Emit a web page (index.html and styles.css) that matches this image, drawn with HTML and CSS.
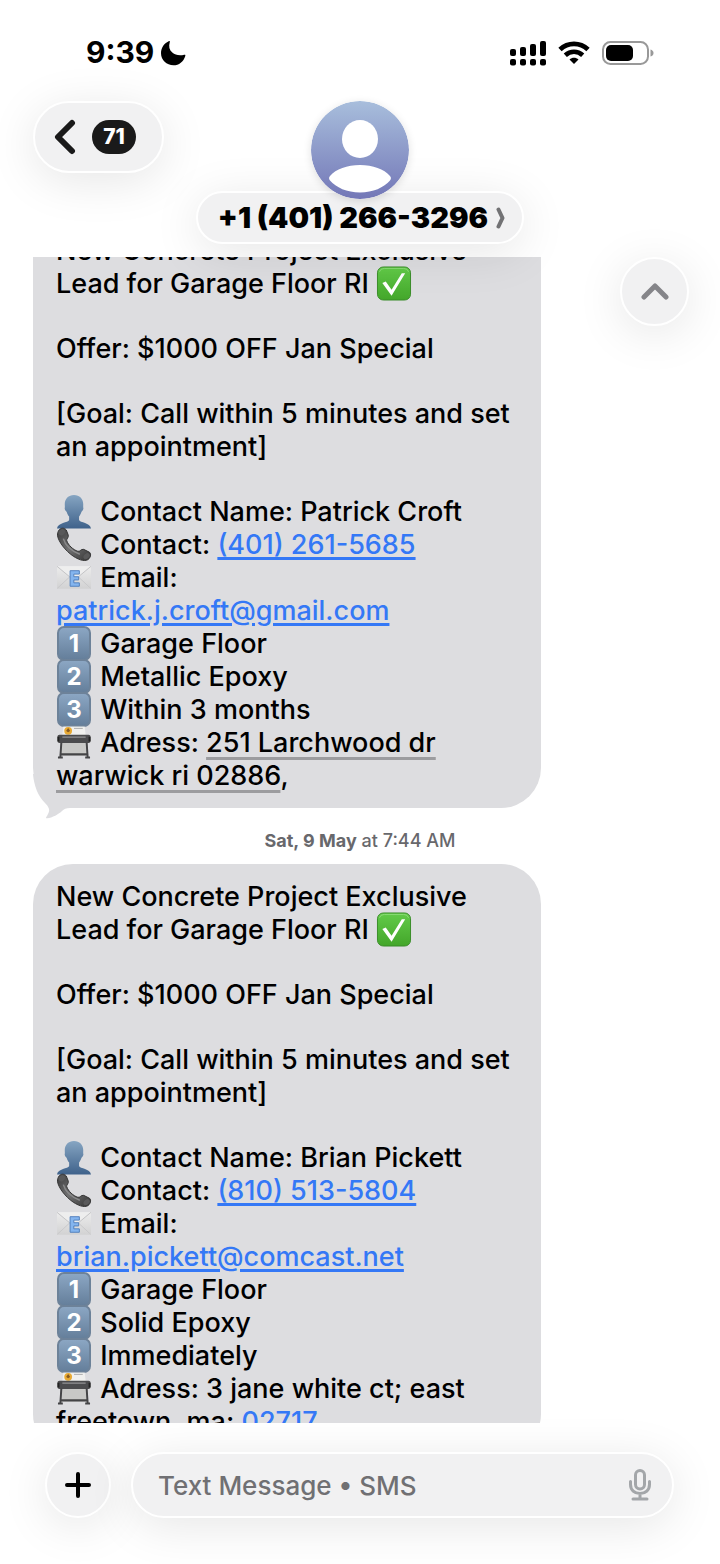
FILE: index.html
```html
<!DOCTYPE html>
<html lang="en">
<head>
    <meta charset="UTF-8">
    <meta name="viewport" content="width=device-width, initial-scale=1.0">
    <title>Messages</title>
    <link rel="stylesheet" href="styles.css">
</head>
<body>
    <!-- Shared emoji shapes -->
    <svg class="sprite" aria-hidden="true">
        <defs>
            <linearGradient id="green" x1="0" y1="0" x2="0" y2="1">
                <stop offset="0" stop-color="#62cb49"/>
                <stop offset="1" stop-color="#43a62a"/>
            </linearGradient>
            <linearGradient id="bust" x1="0" y1="0" x2="0" y2="1">
                <stop offset="0" stop-color="#86a5c2"/>
                <stop offset="1" stop-color="#3f628b"/>
            </linearGradient>
            <linearGradient id="paper" x1="0" y1="0" x2="0" y2="1">
                <stop offset="0" stop-color="#ececec"/>
                <stop offset="1" stop-color="#d2d2d3"/>
            </linearGradient>
            <linearGradient id="phone" x1="0" y1="0" x2="1" y2="1">
                <stop offset="0" stop-color="#3b3b3c"/>
                <stop offset="0.5" stop-color="#717172"/>
                <stop offset="1" stop-color="#333"/>
            </linearGradient>
        </defs>
        <symbol id="check" viewBox="0 0 36 36">
            <rect x="1" y="1" width="34" height="34" rx="6" fill="url(#green)" stroke="#398c28"/>
            <path d="M3 6q1-3.500 5-3.500h20q4 0 5 3.500" fill="none" stroke="#8bdc77"/>
            <path d="M6 17.500 9.500 16l6 8.500L26 7.500h3.500L15.500 30.500z" fill="#fff"/>
        </symbol>
        <symbol id="person" viewBox="0 0 36 36">
            <path d="M18 1c5.700 0 9.500 4 9.500 9.500 0 1.600-.2 3 .2 4.300-.2 1.600-1.300 2.700-2 3.500-.6 2.300-1.700 3.800-2.500 4.900v3.500c1 3 11.500 2.500 12.300 8.800H.5C1.300 29.200 12 29.700 13 26.700v-3.500c-1-1.100-2-2.600-2.600-4.900-.8-.8-1.800-1.900-2-3.500.4-1.300.1-2.700.1-4.300C8.500 5 12.300 1 18 1z" fill="url(#bust)"/>
        </symbol>
        <symbol id="handset" viewBox="0 0 36 36">
            <path d="M2 4C4 .5 8 .5 10 3l2 5c1 3-2 4-1.500 6 1.500 4.500 6.500 9.500 11.500 11 2.500.5 3-2.500 6-2l6 3c2 2 1 5.500-1.500 7.500-4 2.500-11 0-18-5.500C6 21 .5 12 1 7z" fill="url(#phone)" stroke="#333"/>
            <ellipse cx="5.500" cy="5.500" rx="3.600" ry="3" transform="rotate(-40 5.500 5.500)" fill="#59595a"/>
            <ellipse cx="31" cy="30" rx="3.600" ry="2.600" transform="rotate(-40 31 30)" fill="#59595a"/>
            <path d="M7 12c2 7 9 13 17 16" fill="none" stroke="#8a8a8b" stroke-width="1.500"/>
        </symbol>
        <symbol id="mail" viewBox="0 0 36 36">
            <path d="M.5 6.500h35v23H.5z" fill="url(#paper)"/>
            <path d="M.5 6.500 18 21 35.500 6.500" fill="#eee" stroke="#c2c2c4"/>
            <path d="M1 29l13-12M35 29L22 17" stroke="#c8c8ca"/>
            <path d="M14 11h9.500v3.500h-5.700v2.700h5v3.300h-5v3h5.700V27H14z" fill="#84b5ef" stroke="#5280bd"/>
        </symbol>
        <symbol id="printer" viewBox="0 0 36 36">
            <path d="M7 1.500h22l1 9H6z" fill="#f0f0ee"/>
            <circle cx="12" cy="6" r="4" fill="#e8aa34"/>
            <path d="M10 6q2 3 4 0l-2-3z" fill="#875a20"/>
            <path d="M18 3.500h9" stroke="#aaa"/>
            <path d="M5 17h26l1 14H4z" fill="#c8c8c6" stroke="#858584"/>
            <rect x="1" y="10" width="34" height="8.500" rx="2" fill="#4b4b4d"/>
            <path d="M6 12.500h24" stroke="#88888a" stroke-width="1.500"/>
            <path d="M2 12v5M34 12v5" stroke="#222" stroke-width="2"/>
            <path d="M5 18 4 32.500M31 18l1 14.500M4 30h28M1.500 33.500h5M29.500 33.500h5" fill="none" stroke="#444446" stroke-width="2"/>
        </symbol>
    </svg>

    <div class="screen">
        <header class="header">
            <div class="status">
                <div class="status-left">
                    <span class="clock">9:39</span>
                    <svg class="moon" viewBox="0 0 26 26" aria-label="Focus on">
                        <path d="M9.800 2C8.500 6.500 9.300 10 12.300 12.500S19 16 24.200 14.800c.9-.3 1.400.3 1.100 1.100C23.500 21.700 19 25.200 13.500 25.200 6.500 25.200 1 19.800 1 13.200 1 7.800 4 3.300 8.700 1.200c.8-.4 1.400.100 1.100.8z"/>
                    </svg>
                </div>
                <div class="status-right">
                    <svg class="signal" viewBox="0 0 36 26" aria-label="Signal">
                        <rect x="0" y="9" width="6" height="7" rx="2"/>
                        <rect x="10" y="7" width="6" height="9" rx="2"/>
                        <rect x="20" y="4" width="6" height="12" rx="2"/>
                        <rect x="30" y="1" width="6" height="15" rx="2"/>
                        <rect x="0" y="19" width="6" height="6.500" rx="2"/>
                        <rect x="10" y="19" width="6" height="6.500" rx="2"/>
                        <rect x="20" y="19" width="6" height="6.500" rx="2"/>
                        <rect x="30" y="19" width="6" height="6.500" rx="2"/>
                    </svg>
                    <svg class="wifi" viewBox="0 0 32 24" aria-label="Wi-Fi">
                        <path d="M2 8.500C10 .9 22 .9 30 8.500" fill="none" stroke="#000" stroke-width="4.800"/>
                        <path d="M7.300 14.200c5-4.700 12.400-4.700 17.400 0" fill="none" stroke="#000" stroke-width="4.600"/>
                        <path d="M11.500 18.500c2.600-2.400 6.400-2.400 9 0L16 23z"/>
                    </svg>
                    <svg class="battery" viewBox="0 0 52 26" aria-label="Battery">
                        <rect x="1" y="2" width="45" height="22" rx="7.500" fill="none" stroke="#999" stroke-width="2"/>
                        <rect x="4" y="5" width="27" height="16" rx="5"/>
                        <path d="M48.500 9.500q3 1 3 3.500t-3 3.500z" fill="#999"/>
                    </svg>
                </div>
            </div>

            <nav class="nav">
                <button class="glass back" type="button" aria-label="Back">
                    <svg class="back-arrow" viewBox="0 0 22 36" aria-hidden="true">
                        <path d="M18 4 4 18l14 14"/>
                    </svg>
                    <span class="count">71</span>
                </button>
                <div class="contact">
                    <svg class="avatar" viewBox="0 0 98 98" aria-hidden="true">
                        <defs>
                            <linearGradient id="sky" x1="0" y1="0" x2="0" y2="1">
                                <stop offset="0" stop-color="#a8bedc"/>
                                <stop offset="1" stop-color="#7377b7"/>
                            </linearGradient>
                        </defs>
                        <circle cx="49" cy="49" r="49" fill="url(#sky)"/>
                        <ellipse cx="49" cy="38" rx="18" ry="19" fill="#fff"/>
                        <path d="M19 75c6-7 17-11 30-11s24 4 30 11c1.500 1.500 1 3 0 4.500-6 7-17 12-30 12s-24-5-30-12c-1-1.500-1.500-3 0-4.500z" fill="#fff"/>
                    </svg>
                    <button class="glass number" type="button">
                        +1 (401) 266-3296
                        <svg class="more" viewBox="0 0 10 22" aria-hidden="true">
                            <path d="M2.500 2.500 L6.500 11 L2.500 19.500"/>
                        </svg>
                    </button>
                </div>
            </nav>
        </header>

        <main class="thread">
            <article class="bubble">
                <p>New Concrete Project Exclusive<br>
                Lead for Garage Floor RI <svg class="emoji" role="img" aria-label="check"><use href="#check"/></svg></p>
                <p>Offer: $1000 OFF Jan Special</p>
                <p>[Goal: Call within 5 minutes and set<br>an appointment]</p>
                <ul class="details">
                    <li><svg class="emoji" aria-hidden="true"><use href="#person"/></svg> Contact Name: Patrick Croft</li>
                    <li><svg class="emoji" aria-hidden="true"><use href="#handset"/></svg> Contact: <a href="tel:+14012615685">(401) 261-5685</a></li>
                    <li><svg class="emoji" aria-hidden="true"><use href="#mail"/></svg> Email:<br><a href="mailto:patrick.j.croft@gmail.com">patrick.j.croft@gmail.com</a></li>
                    <li><span class="emoji keycap">1</span> Garage Floor</li>
                    <li><span class="emoji keycap">2</span> Metallic Epoxy</li>
                    <li><span class="emoji keycap">3</span> Within 3 months</li>
                    <li><svg class="emoji" aria-hidden="true"><use href="#printer"/></svg> Adress: <a class="address" href="#map">251 Larchwood dr<br>warwick ri 02886</a>,</li>
                </ul>
                <svg class="tail" viewBox="0 0 44 46" aria-hidden="true">
                    <path d="M0 0C1 12 5 22 12 29c4 4 5 7 3.500 10-1 2-1.500 3-2.200 4-.6 1 0 1.500 1 1.200C19 44 26 40 29 37c2-2 4-3 8-3h7V0z"/>
                </svg>
            </article>

            <p class="stamp"><b>Sat, 9 May</b> at 7:44 AM</p>

            <article class="bubble">
                <p>New Concrete Project Exclusive<br>
                Lead for Garage Floor RI <svg class="emoji" role="img" aria-label="check"><use href="#check"/></svg></p>
                <p>Offer: $1000 OFF Jan Special</p>
                <p>[Goal: Call within 5 minutes and set<br>an appointment]</p>
                <ul class="details">
                    <li><svg class="emoji" aria-hidden="true"><use href="#person"/></svg> Contact Name: Brian Pickett</li>
                    <li><svg class="emoji" aria-hidden="true"><use href="#handset"/></svg> Contact: <a href="tel:+18105135804">(810) 513-5804</a></li>
                    <li><svg class="emoji" aria-hidden="true"><use href="#mail"/></svg> Email:<br><a href="mailto:brian.pickett@comcast.net">brian.pickett@comcast.net</a></li>
                    <li><span class="emoji keycap">1</span> Garage Floor</li>
                    <li><span class="emoji keycap">2</span> Solid Epoxy</li>
                    <li><span class="emoji keycap">3</span> Immediately</li>
                    <li><svg class="emoji" aria-hidden="true"><use href="#printer"/></svg> Adress: 3 jane white ct; east<br>freetown, ma; <a href="tel:02717">02717</a></li>
                </ul>
            </article>
        </main>

        <button class="glass jump" type="button" aria-label="Jump up">
            <svg viewBox="0 0 28 18" aria-hidden="true"><path d="M3 14 14 3l11 11"/></svg>
        </button>

        <form class="composer">
            <button class="glass plus" type="button" aria-label="Add">
                <svg viewBox="0 0 28 28" aria-hidden="true"><path d="M14 3v22M3 14h22"/></svg>
            </button>
            <div class="glass field">
                <input type="text" placeholder="Text Message • SMS" aria-label="Message">
                <button class="mic" type="button" aria-label="Dictate">
                    <svg viewBox="0 0 24 32" aria-hidden="true">
                        <rect x="7.500" y="1.500" width="9" height="18.500" rx="4.500"/>
                        <path d="M2.500 12.500v3c0 5.500 4 9 9.500 9s9.500-3.500 9.500-9v-3M12 24.500v5M5 30h14"/>
                    </svg>
                </button>
            </div>
        </form>
    </div>
</body>
</html>
```

FILE: styles.css
```css
* {
    box-sizing: border-box;
}

body {
    margin: 0;
    background: #fff;
    color: #000;
    font-family: Inter, "Liberation Sans", sans-serif;
    font-size: 27px;
    line-height: 33px;
}

button,
input {
    margin: 0;
    padding: 0;
    border: 0;
    background: none;
    color: inherit;
    font: inherit;
}

p,
ul {
    margin: 0;
    padding: 0;
}

.sprite {
    position: absolute;
    width: 0;
    height: 0;
}

.screen {
    position: relative;
    display: flex;
    flex-direction: column;
    height: 100vh;
    overflow: hidden;
}

/* Rounded translucent controls */
.glass {
    background: #f1f1f2;
    border: 2px solid #fff;
    border-radius: 40px;
    box-shadow: 0 8px 48px rgba(0, 0, 0, 0.1);
}

/* Header */
.header {
    position: relative;
    z-index: 1;
    flex: none;
    padding-bottom: 13px;
}

.status {
    display: flex;
    justify-content: space-between;
    align-items: center;
    padding: 36px 66px 32px 86px;
}

.status-left,
.status-right {
    display: flex;
    align-items: center;
}

.status-left {
    gap: 6px;
}

.status-right {
    gap: 12px;
}

.clock {
    font-size: 30px;
    font-weight: 700;
}

.moon {
    width: 26px;
    height: 26px;
}

.signal {
    width: 36px;
    height: 26px;
}

.wifi {
    width: 32px;
    height: 24px;
}

.battery {
    width: 52px;
    height: 26px;
}

.nav {
    display: grid;
    grid-template-columns: 1fr auto 1fr;
    align-items: start;
    padding: 0 33px;
}

.back {
    display: flex;
    align-items: center;
    justify-self: start;
    gap: 16px;
    height: 72px;
    padding: 0 26px 0 19px;
}

.back-arrow {
    width: 22px;
    height: 36px;
    fill: none;
    stroke: #1a1a1a;
    stroke-width: 6;
    stroke-linecap: round;
    stroke-linejoin: round;
}

.count {
    min-width: 44px;
    border-radius: 17px;
    background: #1a1a1a;
    color: #fff;
    font-size: 21px;
    font-weight: 800;
    line-height: 34px;
}

.contact {
    display: flex;
    flex-direction: column;
    align-items: center;
}

.avatar {
    position: relative;
    z-index: 1;
    width: 98px;
    height: 98px;
    margin-bottom: -8px;
    border-radius: 50%;
    box-shadow: 0 2px 8px rgba(0, 0, 0, 0.12);
}

.number {
    display: flex;
    align-items: center;
    gap: 8px;
    height: 53px;
    padding: 0 16px 0 20px;
    font-size: 29px;
    font-weight: 900;
}

.more {
    width: 10px;
    height: 22px;
    fill: none;
    stroke: #727274;
    stroke-width: 4;
    stroke-linecap: round;
    stroke-linejoin: round;
}

/* Message thread */
.thread {
    flex: 1;
    min-height: 0;
    overflow: hidden;
    padding: 0 33px;
}

.bubble {
    position: relative;
    isolation: isolate;
    width: 508px;
    max-width: 100%;
    padding: 16px 23px;
    border-radius: 40px;
    background: #dddde0;
    font-weight: 500;
    white-space: nowrap;
}

/* The thread is scrolled past the first line */
.bubble:first-child {
    margin-top: -39px;
}

.bubble p {
    margin-bottom: 32px;
}

.bubble a {
    color: #3478f6;
    text-decoration: underline;
    text-decoration-thickness: 3px;
    text-underline-offset: 3px;
}

.bubble a.address {
    color: #000;
    text-decoration-color: #9c9c9f;
    text-underline-offset: 5px;
}

.details {
    list-style: none;
}

.emoji {
    display: inline-block;
    width: 36px;
    height: 35px;
    margin: -1px 1px -1px 0;
    vertical-align: top;
}

.keycap {
    width: 34px;
    margin: -1px 2px -1px 1px;
    border: 2px solid #6d8299;
    border-radius: 7px;
    background: linear-gradient(#8ba6c3, #657f9b);
    color: #fff;
    font-size: 24px;
    font-weight: 700;
    line-height: 31px;
    text-align: center;
}

/* Sits between the bubble's background and its text */
.tail {
    position: absolute;
    z-index: -1;
    left: 0;
    bottom: -12px;
    width: 44px;
    height: 46px;
    fill: #dddde0;
}

.stamp {
    padding: 21px 0 11px;
    color: #68686c;
    font-size: 18px;
    font-weight: 500;
    line-height: 24px;
    text-align: center;
}

.stamp b {
    font-weight: 700;
}

/* Floats over the thread */
.jump {
    position: absolute;
    z-index: 1;
    top: 257px;
    right: 31px;
    display: grid;
    place-items: center;
    width: 69px;
    height: 69px;
}

.jump svg {
    width: 28px;
    height: 18px;
    fill: none;
    stroke: #858589;
    stroke-width: 5;
    stroke-linecap: round;
    stroke-linejoin: round;
}

/* Composer */
.composer {
    display: flex;
    flex: none;
    gap: 20px;
    padding: 29px 46px 46px 45px;
}

.plus {
    display: grid;
    flex: none;
    place-items: center;
    width: 66px;
    height: 66px;
}

.plus svg {
    width: 28px;
    height: 28px;
    stroke: #000;
    stroke-width: 4;
    stroke-linecap: round;
}

.field {
    display: flex;
    flex: 1;
    align-items: center;
    height: 66px;
    padding: 0 20px 0 25px;
}

.field input {
    flex: 1;
    min-width: 0;
    outline: none;
    font-size: 26px;
    font-weight: 500;
}

.field input::placeholder {
    color: #707073;
    opacity: 1;
}

.mic {
    display: flex;
}

.mic svg {
    width: 24px;
    height: 32px;
    fill: none;
    stroke: #a3a6a9;
    stroke-width: 3;
    stroke-linecap: round;
}
```
